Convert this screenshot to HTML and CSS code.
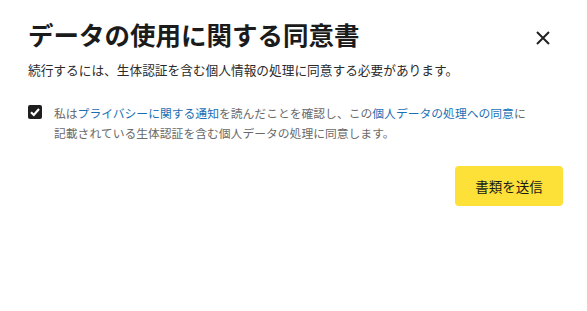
FILE: index.html
```html
<!DOCTYPE html>
<html lang="ja">
<head>
<meta charset="utf-8">
<link rel="stylesheet" href="styles.css">
</head>
<body>
<div class="dialog">
  <div class="header">
    <h1 class="title">データの使用に関する同意書</h1>
    <button class="close" aria-label="閉じる">
      <svg width="14" height="14" viewBox="0 0 14 14"><path d="M1 1L13 13M13 1L1 13" stroke="#222" stroke-width="2" fill="none"/></svg>
    </button>
  </div>
  <p class="subtitle">続行するには、生体認証を含む個人情報の処理に同意する必要があります。</p>
  <div class="consent">
    <span class="check">
      <svg width="14" height="14" viewBox="0 0 14 14"><rect width="14" height="14" rx="2" fill="#1e1e1e"/><path d="M3 7.2L5.8 10L11 4" stroke="#fff" stroke-width="2.2" fill="none"/></svg>
    </span>
    <p class="consent-text">私は<a class="link">プライバシーに関する通知</a>を読んだことを確認し、この<a class="link">個人データの処理への同意</a>に<br>記載されている生体認証を含む個人データの処理に同意します。</p>
  </div>
  <div class="actions">
    <button class="submit">書類を送信</button>
  </div>
</div>
</body>
</html>
```
FILE: styles.css
```css
html, body {
  margin: 0;
  padding: 0;
  background: #fff;
}
body {
  font-family: "Noto Sans CJK JP", "Noto Sans", sans-serif;
}
.dialog {
  padding: 14px 24px 0 28px;
}
.header {
  display: flex;
  align-items: center;
  justify-content: space-between;
}
.title {
  margin: 0;
  font-size: 25.5px;
  font-weight: 700;
  color: #1b1b1b;
  line-height: 40px;
}
.close {
  border: 0;
  background: none;
  padding: 0;
  width: 14px;
  height: 14px;
  margin-right: 13px;
  margin-top: 8px;
}
.subtitle {
  margin: 6px 0 0;
  font-size: 12.7px;
  color: #2a2a2a;
  line-height: 20px;
}
.consent {
  display: flex;
  gap: 12px;
  margin-top: 23px;
}
.check {
  padding-top: 2px;
  line-height: 0;
}
.consent-text {
  margin: 0;
  font-size: 11.8px;
  color: #6a6a6a;
  line-height: 20px;
}
.link {
  color: #1b6fb5;
}
.actions {
  display: flex;
  justify-content: flex-end;
  margin-top: 23px;
}
.submit {
  border: 0;
  background: #fde138;
  border-radius: 4px;
  width: 108px;
  height: 40px;
  font-family: "Noto Sans CJK JP", sans-serif;
  font-size: 13.5px;
  color: #1a1a1a;
}
```
